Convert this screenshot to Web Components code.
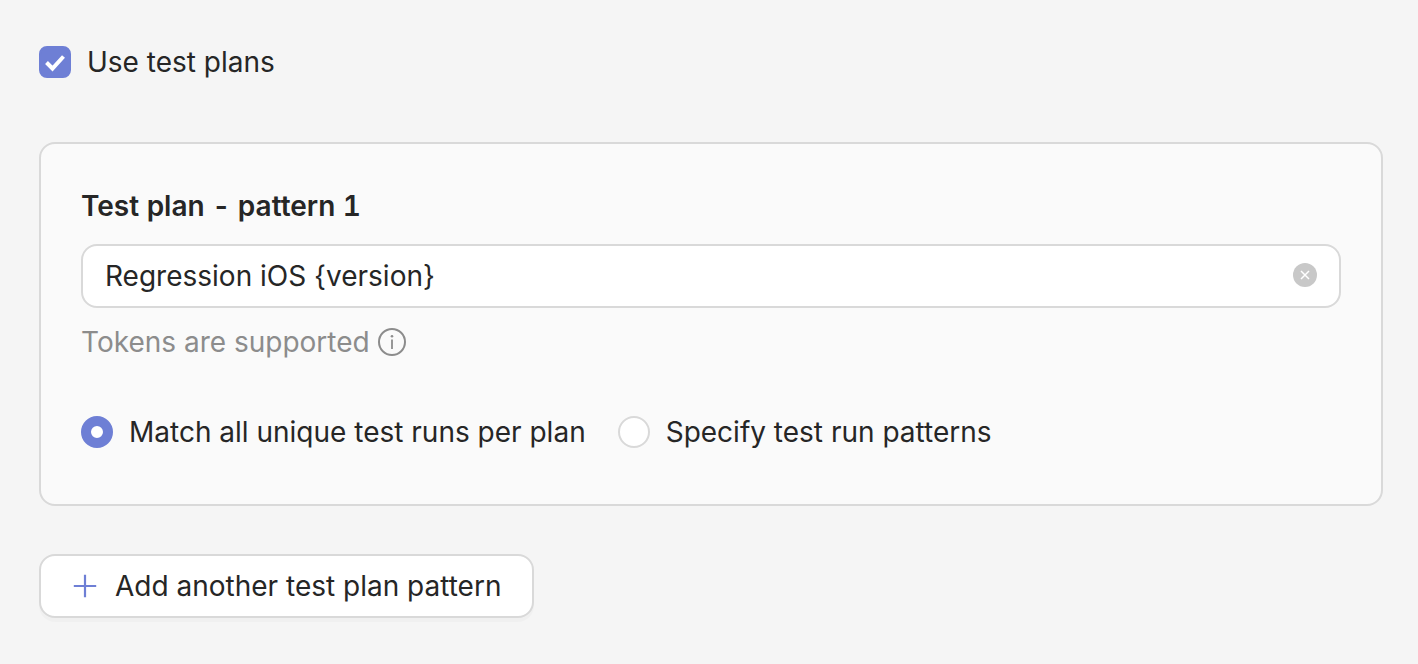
<!DOCTYPE html>
<html lang="en">
<head>
<meta charset="utf-8">
<title>Test plans</title>
<style>
    body {
        margin: 0;
        background: #f5f5f5;
        color: #262626;
        font-family: Inter, "Liberation Sans", sans-serif;
        font-size: 28px;
        line-height: 44px;
        --primary: #6e7fd5;
        --border: #d9d9d9;
        --muted: #8c8c8c;
    }
</style>
</head>
<body>
<test-plan-settings></test-plan-settings>

<script>
function makeTemplate(html) {
    const template = document.createElement("template");
    template.innerHTML = html;
    return template;
}

// Base class: clones the template of the subclass into an open shadow root
class BaseElement extends HTMLElement {
    constructor() {
        super();
        this.attachShadow({ mode: "open" });
        this.shadowRoot.appendChild(this.constructor.template.content.cloneNode(true));
    }
}

class CheckBox extends BaseElement {
    static template = makeTemplate(`
        <style>
        :host {
            display: block;
        }

        label {
            display: flex;
            align-items: center;
            gap: 16px;
            width: fit-content;
        }

        .box {
            display: grid;
            width: 32px;
            height: 32px;
        }

        input {
            grid-area: 1 / 1;
            appearance: none;
            width: 32px;
            height: 32px;
            margin: 0;
            box-sizing: border-box;
            border: 2px solid var(--border);
            border-radius: 8px;
            background: #fff;
        }

        input:checked {
            border-color: var(--primary);
            background: var(--primary);
        }

        svg {
            grid-area: 1 / 1;
            z-index: 1;
            visibility: hidden;
            pointer-events: none;
        }

        input:checked + svg {
            visibility: visible;
        }
        </style>
        <label>
            <span class="box">
                <input type="checkbox">
                <svg width="32" height="32" viewBox="0 0 32 32" fill="none" stroke="#fff" stroke-width="4" aria-hidden="true">
                    <path d="M7.5 16.5l6 6L24.5 10.5"/>
                </svg>
            </span>
            <span><slot></slot></span>
        </label>
    `);

    connectedCallback() {
        this.shadowRoot.querySelector("input").checked = this.hasAttribute("checked");
    }
}

class RadioOptions extends BaseElement {
    static template = makeTemplate(`
        <style>
        :host {
            display: block;
        }

        fieldset {
            display: flex;
            flex-wrap: wrap;
            gap: 16px 32px;
            margin: 0;
            padding: 0;
            border: 0;
        }

        label {
            display: flex;
            align-items: center;
            gap: 16px;
        }

        input {
            appearance: none;
            flex: none;
            width: 32px;
            height: 32px;
            margin: 0;
            box-sizing: border-box;
            border: 2px solid var(--border);
            border-radius: 50%;
            background: #fff;
        }

        input:checked {
            border: 10px solid var(--primary);
        }
        </style>
        <fieldset aria-label="Test run matching">
            <label>
                <input type="radio" name="match" value="all" checked>
                <slot name="first"></slot>
            </label>
            <label>
                <input type="radio" name="match" value="patterns">
                <slot name="second"></slot>
            </label>
        </fieldset>
    `);
}

class ClearableInput extends BaseElement {
    static template = makeTemplate(`
        <style>
        :host {
            display: block;
        }

        label {
            display: block;
            font-weight: 600;
            font-variant-numeric: tabular-nums;
        }

        .field {
            display: flex;
            align-items: center;
            gap: 8px;
            margin-top: 16px;
            padding: 8px 22px;
            border: 2px solid var(--border);
            border-radius: 16px;
            background: #fff;
        }

        input {
            flex: 1;
            min-width: 0;
            height: 44px;
            padding: 0;
            border: 0;
            outline: 0;
            background: none;
            color: inherit;
            font: inherit;
        }

        button {
            display: flex;
            padding: 0;
            border: 0;
            background: none;
        }
        </style>
        <label for="value"><slot></slot></label>
        <div class="field">
            <input id="value" type="text">
            <button type="button" aria-label="Clear">
                <svg width="24" height="26" viewBox="0 0 24 26" aria-hidden="true">
                    <circle cx="12" cy="12" r="12" fill="#c8c8c8"/>
                    <path d="M8 8l8 8M16 8l-8 8" stroke="#fff" stroke-width="1.5"/>
                </svg>
            </button>
        </div>
    `);

    connectedCallback() {
        const input = this.shadowRoot.querySelector("input");
        input.value = this.getAttribute("value") || "";
        this.shadowRoot.querySelector("button").addEventListener("click", () => {
            input.value = "";
            input.focus();
        });
    }
}

class HelpNote extends BaseElement {
    static template = makeTemplate(`
        <style>
        :host {
            display: flex;
            align-items: center;
            gap: 8px;
            color: var(--muted);
        }
        </style>
        <span><slot></slot></span>
        <svg width="28" height="28" viewBox="0 0 28 28" fill="none" stroke="currentColor" stroke-width="2" aria-hidden="true">
            <circle cx="14" cy="14" r="13"/>
            <path d="M14 11.5v9.5" stroke-width="1.8"/>
            <circle cx="14" cy="8.2" r="1.3" fill="currentColor" stroke="none"/>
        </svg>
    `);
}

class PlanCard extends BaseElement {
    static template = makeTemplate(`
        <style>
        :host {
            display: flex;
            flex-direction: column;
            padding: 40px;
            border: 2px solid var(--border);
            border-radius: 16px;
            background: #fafafa;
        }
        </style>
        <slot></slot>
    `);
}

class AddButton extends BaseElement {
    static template = makeTemplate(`
        <style>
        :host {
            display: block;
        }

        button {
            display: flex;
            align-items: center;
            gap: 17px;
            padding: 8px 31px;
            border: 2px solid var(--border);
            border-radius: 16px;
            background: #fff;
            box-shadow: 0 4px 0 rgba(0, 0, 0, 0.02);
            color: inherit;
            font: inherit;
        }
        </style>
        <button type="button">
            <svg width="26" height="26" viewBox="0 0 26 26" fill="none" stroke="var(--primary)" stroke-width="2.2" aria-hidden="true">
                <path d="M13 1.8v22.4M1.8 13h22.4"/>
            </svg>
            <span><slot></slot></span>
        </button>
    `);
}

class TestPlanSettings extends BaseElement {
    static template = makeTemplate(`
        <style>
        :host {
            display: block;
            padding: 40px 35px 40px 39px;
        }

        plan-card {
            margin: 58px 0 48px;
        }

        help-note {
            margin: 12px 0 46px;
        }

        radio-options {
            margin-bottom: 10px;
        }
        </style>
        <check-box checked>Use test plans</check-box>
        <plan-card>
            <clearable-input value="Regression iOS {version}">Test plan - pattern 1</clearable-input>
            <help-note>Tokens are supported</help-note>
            <radio-options>
                <span slot="first">Match all unique test runs per plan</span>
                <span slot="second">Specify test run patterns</span>
            </radio-options>
        </plan-card>
        <add-button>Add another test plan pattern</add-button>
    `);
}

window.customElements.define("check-box", CheckBox);
window.customElements.define("radio-options", RadioOptions);
window.customElements.define("clearable-input", ClearableInput);
window.customElements.define("help-note", HelpNote);
window.customElements.define("plan-card", PlanCard);
window.customElements.define("add-button", AddButton);
window.customElements.define("test-plan-settings", TestPlanSettings);
</script>
</body>
</html>
